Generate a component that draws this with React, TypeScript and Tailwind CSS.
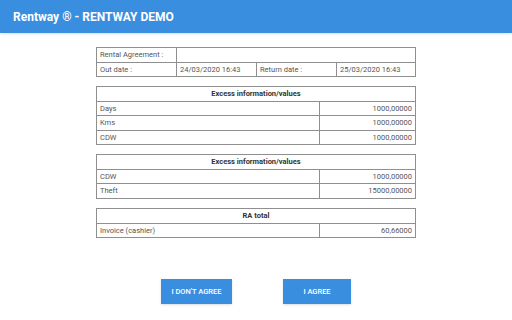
import React from "react";

const border = "border-[#8f8f8f]";

const InfoTable: React.FC<{ title: string; rows: [string, string][]; className?: string }> = ({
  title,
  rows,
  className,
}) => (
  <div className={`w-[320px] border ${border} ${className || ""}`}>
    <div className="h-[13.5px] flex items-center justify-center font-bold text-[#333]">{title}</div>
    {rows.map(([label, value]) => (
      <div key={label} className={`flex h-[14.5px] border-t ${border}`}>
        <div className="flex-1 flex items-center px-[3px]">{label}</div>
        <div className={`w-[96px] flex items-center justify-end px-[3px] border-l ${border}`}>{value}</div>
      </div>
    ))}
  </div>
);

const App: React.FC = () => {
  return (
    <div className="w-[512px] h-[320px] bg-white font-['Roboto',sans-serif] flex flex-col">
      <div className="h-[33px] bg-[#3a8ee0] flex items-center px-[13px] shadow-sm">
        <span className="text-white text-[12px] font-bold">Rentway ® - RENTWAY DEMO</span>
      </div>

      <div className="flex flex-col items-center pt-[14px] text-[7.5px] leading-none text-[#555]">
        <div className={`w-[320px] border ${border}`}>
          <div className="flex h-[13.5px]">
            <div className={`w-[80px] flex items-center px-[3px] border-r ${border}`}>Rental Agreement :</div>
            <div className="flex-1"></div>
          </div>
          <div className={`flex h-[14.5px] border-t ${border}`}>
            <div className={`w-[80px] flex items-center px-[3px] border-r ${border}`}>Out date :</div>
            <div className={`w-[80px] flex items-center px-[3px] border-r ${border}`}>24/03/2020 16:43</div>
            <div className={`w-[80px] flex items-center px-[3px] border-r ${border}`}>Return date :</div>
            <div className="flex-1 flex items-center px-[3px]">25/03/2020 16:43</div>
          </div>
        </div>

        <InfoTable
          className="mt-[9px]"
          title="Excess information/values"
          rows={[
            ["Days", "1000,00000"],
            ["Kms", "1000,00000"],
            ["CDW", "1000,00000"],
          ]}
        />

        <InfoTable
          className="mt-[9px]"
          title="Excess information/values"
          rows={[
            ["CDW", "1000,00000"],
            ["Theft", "15000,00000"],
          ]}
        />

        <InfoTable
          className="mt-[9.5px]"
          title="RA total"
          rows={[["Invoice (cashier)", "60,66000"]]}
        />

        <div className="flex gap-[51px] mt-[41px]">
          <button className="w-[71px] h-[25px] bg-[#3a8ee0] text-white text-[7.5px] font-medium shadow-sm">
            I DON'T AGREE
          </button>
          <button className="w-[68px] h-[25px] bg-[#3a8ee0] text-white text-[7.5px] font-medium shadow-sm">
            I AGREE
          </button>
        </div>
      </div>
    </div>
  );
};

export default App;
